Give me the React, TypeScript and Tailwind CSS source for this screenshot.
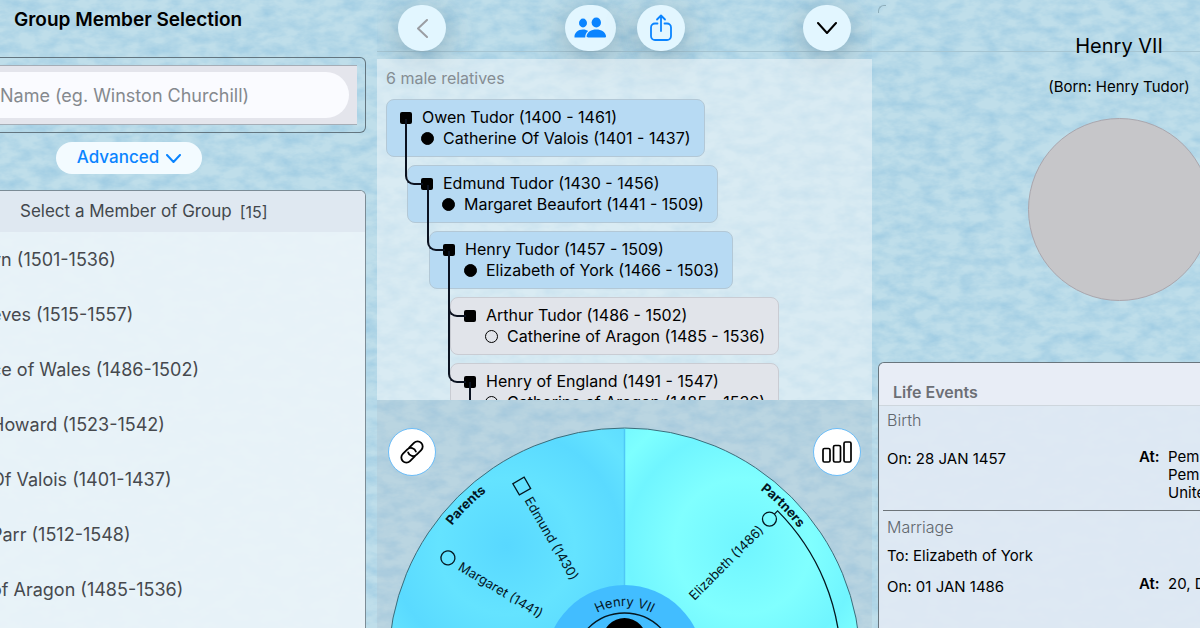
import React from 'react';
import clsx from 'clsx';

type Person = {
  name: string;
  spouse: string;
  depth: number;
  direct: boolean;
  // how many rows up the parent card is
  parentRows: number;
  hasChildren?: boolean;
};

const members = [
  'yn (1501-1536)',
  'eves (1515-1557)',
  'ce of Wales (1486-1502)',
  'Howard (1523-1542)',
  'Of Valois (1401-1437)',
  'Parr (1512-1548)',
  'of Aragon (1485-1536)',
];

const relatives: Person[] = [
  { name: 'Owen Tudor (1400 - 1461)', spouse: 'Catherine Of Valois (1401 - 1437)', depth: 0, direct: true, parentRows: 0 },
  { name: 'Edmund Tudor (1430 - 1456)', spouse: 'Margaret Beaufort (1441 - 1509)', depth: 1, direct: true, parentRows: 1 },
  { name: 'Henry Tudor (1457 - 1509)', spouse: 'Elizabeth of York (1466 - 1503)', depth: 2, direct: true, parentRows: 1 },
  { name: 'Arthur Tudor (1486 - 1502)', spouse: 'Catherine of Aragon (1485 - 1536)', depth: 3, direct: false, parentRows: 1 },
  { name: 'Henry of England (1491 - 1547)', spouse: 'Catherine of Aragon (1485 - 1536)', depth: 3, direct: false, parentRows: 2, hasChildren: true },
];

const indents = ['ml-0', 'ml-[21px]', 'ml-[43px]', 'ml-[64px]'];
const connectorSpans = ['hidden', '-top-[47px] h-[66px]', '-top-[113px] h-[132px]'];

const PaperTexture: React.FC = () => (
  <svg className="absolute inset-0 w-full h-full" aria-hidden="true">
    <filter id="paper" x="0" y="0" width="100%" height="100%" colorInterpolationFilters="sRGB">
      <feTurbulence type="fractalNoise" baseFrequency="0.05 0.09" numOctaves="4" seed="8" />
      <feColorMatrix values="0 0 0 0 0.54  0 0 0 0 0.75  0 0 0 0 0.87  1 0 0 0 -0.33" />
    </filter>
    <rect width="100%" height="100%" filter="url(#paper)" />
  </svg>
);

const Chevron: React.FC<{ direction: 'down' | 'left'; width: number; height: number; color: string }> = ({ direction, width, height, color }) => (
  <svg width={width} height={height} viewBox={`0 0 ${width} ${height}`} fill="none" stroke={color} strokeWidth="2" strokeLinecap="round" strokeLinejoin="round" aria-hidden="true">
    <path d={direction === 'down' ? `M1 1 ${width / 2} ${height - 1} ${width - 1} 1` : `M${width - 1} 1 1 ${height / 2} ${width - 1} ${height - 1}`} />
  </svg>
);

const PeopleIcon: React.FC = () => (
  <svg width="32" height="22" viewBox="0 0 32 22" fill="#0a84ff" aria-hidden="true">
    <ellipse cx="9" cy="6" rx="4" ry="4.4" />
    <path d="M.5 20.500c-.4-4.500 3.500-8 8.500-8 2.200 0 3.900.6 5.200 1.600-2 1.500-3 3.600-3 6.400z" />
    <ellipse cx="22.300" cy="5.500" rx="4.700" ry="5.100" />
    <path d="M14 20.500c-1 0-1.500-.5-1.400-1.400.4-4 4.600-6.700 9.700-6.700s9.300 2.700 9.700 6.700c.1.900-.4 1.400-1.400 1.400z" />
  </svg>
);

const ShareIcon: React.FC = () => (
  <svg width="24" height="28" viewBox="0 0 24 28" fill="none" stroke="#0a84ff" strokeWidth="1.800" strokeLinecap="round" strokeLinejoin="round" aria-hidden="true">
    <path d="M8.500 9.500H6A4 4 0 0 0 2 13.500v8.500a4 4 0 0 0 4 4h12a4 4 0 0 0 4-4v-8.500a4 4 0 0 0-4-4h-2.500" />
    <path d="M12 17V2M8 5.500 12 1.500l4 4" />
  </svg>
);

const LinkIcon: React.FC = () => (
  <svg width="34" height="34" viewBox="0 0 28 28" fill="none" stroke="#000" strokeWidth="1.500" strokeLinecap="round" aria-hidden="true">
    <g transform="rotate(-45 14 14)">
      <path d="M13 18.200H7.500a4.200 4.200 0 0 1 0-8.400h5.300a4.200 4.200 0 0 1 3.700 6.200" />
      <path d="M15 9.800H20.500a4.200 4.200 0 0 1 0 8.400h-5.300a4.200 4.200 0 0 1-3.700-6.200" />
    </g>
  </svg>
);

const BarsIcon: React.FC = () => (
  <svg width="30" height="22" viewBox="0 0 30 22" fill="none" stroke="#000" strokeWidth="1.700" aria-hidden="true">
    <rect x="1" y="7.500" width="7" height="13.500" rx="1.500" />
    <rect x="11.500" y="4.500" width="7" height="16.500" rx="1.500" />
    <rect x="22" y="1" width="7" height="20" rx="1.500" />
  </svg>
);

const RoundButton: React.FC<{ label: string; className?: string; children: React.ReactNode }> = ({ label, className, children }) => (
  <button
    aria-label={label}
    className={clsx(
      'h-[46px] rounded-full bg-[#e2f6ff] flex items-center justify-center shadow-[0_8px_32px_rgba(50,80,100,0.35)]',
      className ?? 'w-12'
    )}
  >
    {children}
  </button>
);

const FloatButton: React.FC<{ label: string; className: string; children: React.ReactNode }> = ({ label, className, children }) => (
  <button
    aria-label={label}
    className={clsx('absolute top-7 size-12 rounded-full bg-white border border-[#6cbdf8] flex items-center justify-center', className)}
  >
    {children}
  </button>
);

const RelativeCard: React.FC<{ person: Person }> = ({ person }) => (
  <li
    className={clsx(
      'relative w-fit h-[58px] rounded-lg border pt-[7px] px-[13px] text-base leading-[21px]',
      indents[person.depth],
      person.direct ? 'bg-[#b7daf3] border-[#b3c8d6]' : 'bg-[#e1e4ea] border-[#c9ccd3]'
    )}
  >
    <span className={clsx('absolute -left-[3px] w-[18px] border-l-2 border-b-2 border-[#0b1220] rounded-bl-[9px]', connectorSpans[person.parentRows])} />
    {person.hasChildren && <span className="absolute left-[18px] top-[18px] w-0.5 h-10 bg-[#0b1220]" />}
    <div className="flex items-center">
      <span className="size-3 mr-2.5 rounded-xs bg-black" />
      {person.name}
    </div>
    <div className="flex items-center pl-[21px]">
      <span className={clsx('size-[13px] mr-[9px] rounded-full border-[1.5px] border-black', person.direct && 'bg-black')} />
      {person.spouse}
    </div>
  </li>
);

// Coordinates are relative to the centre of the wheel
const FamilyWheel: React.FC = () => (
  <svg viewBox="0 0 495 228" className="w-full block" fontFamily="Inter, sans-serif" fontSize="13" fill="#04161f">
    <defs>
      <radialGradient id="parents" gradientUnits="userSpaceOnUse" cx="-118" cy="-118" r="170">
        <stop offset="0" stopColor="#58d8ff" />
        <stop offset="0.4" stopColor="#64e3ff" />
        <stop offset="0.68" stopColor="#5adaff" />
        <stop offset="0.85" stopColor="#64e3ff" />
        <stop offset="1" stopColor="#5edcff" />
      </radialGradient>
      <radialGradient id="partners" gradientUnits="userSpaceOnUse" cx="118" cy="-118" r="170">
        <stop offset="0" stopColor="#70f5ff" />
        <stop offset="0.4" stopColor="#80ffff" />
        <stop offset="0.68" stopColor="#70f5ff" />
        <stop offset="0.85" stopColor="#7dffff" />
        <stop offset="1" stopColor="#74f8ff" />
      </radialGradient>
      <path id="rim" d="M-221 0A221 221 0 0 1 221 0" />
      <path id="hub" d="M-58 0A58 58 0 0 1 58 0" />
    </defs>
    <g transform="translate(247.500 264)">
      <path d="M0 0H-236A236 236 0 0 1 0-236z" fill="url(#parents)" />
      <path d="M0 0V-236A236 236 0 0 1 236 0z" fill="url(#partners)" />
      <circle r="236" fill="none" stroke="#3d6c7a" strokeWidth="1" />
      <path d="M0-235V0" stroke="#4fc8f6" strokeWidth="1.500" />

      <text fontWeight="700">
        <textPath href="#rim" startOffset="25%" textAnchor="middle">Parents</textPath>
      </text>
      <text fontWeight="700">
        <textPath href="#rim" startOffset="75%" textAnchor="middle">Partners</textPath>
      </text>

      <g transform="rotate(60)">
        <rect x="-212" y="-6.500" width="13" height="13" fill="none" stroke="#04161f" strokeWidth="1.300" />
        <text x="-192" y="5">Edmund (1430)</text>
      </g>
      <g transform="rotate(31)">
        <circle cx="-206" r="7" fill="none" stroke="#04161f" strokeWidth="1.300" />
        <text x="-192" y="5">Margaret (1441)</text>
      </g>
      <g transform="rotate(-45)">
        <circle cx="205" r="7" fill="none" stroke="#04161f" strokeWidth="1.300" />
        <path d="M212 0H216.500A216.500 216.500 0 0 1 153 153" fill="none" stroke="#04161f" strokeWidth="1.300" />
        <text x="193" y="5" textAnchor="end">Elizabeth (1486)</text>
      </g>

      <circle r="79" fill="#42bdff" />
      <circle r="51" fill="none" stroke="#04161f" strokeWidth="1.300" />
      <circle cy="-24" r="22" fill="#000" />
      <text>
        <textPath href="#hub" startOffset="50%" textAnchor="middle">Henry VII</textPath>
      </text>
    </g>
  </svg>
);

const MemberPicker: React.FC = () => (
  <section className="flex flex-col pr-[11px] overflow-hidden">
    <h1 className="pl-3.5 mt-2 text-[19px] leading-6 font-semibold text-black whitespace-nowrap">Group Member Selection</h1>

    <div className="mt-[25px] h-[76px] py-[7px] pr-2 border border-l-0 border-[#63757f] rounded-r-md">
      <div className="h-full py-1.5 pr-2 border-y border-[#a5adb6] bg-[#e4e5ec]">
        <input
          type="search"
          aria-label="Name"
          placeholder="Name (eg. Winston Churchill)"
          className="w-full h-full rounded-r-full bg-[#fafbff] text-lg placeholder:text-[#85898e] outline-none"
        />
      </div>
    </div>

    <button className="mt-[9px] ml-14 w-[146px] h-8 shrink-0 rounded-full bg-[#f3fbff] text-[#0a84ff] text-[17px] font-medium flex items-center justify-center gap-[7px]">
      Advanced
      <Chevron direction="down" width={15} height={9} color="#0a84ff" />
    </button>

    <div className="mt-4 flex-1 border border-l-0 border-b-0 border-[#7b8c96] rounded-tr-md bg-[#eaf3f9]/95 overflow-hidden">
      <h2 className="h-[41px] pl-5 flex items-center gap-2 bg-[#dfe8f1] text-[17px] text-[#42474c]">
        Select a Member of Group <span className="text-base">[15]</span>
      </h2>
      <ul className="-ml-[9px]">
        {members.map((member) => (
          <li key={member} className="h-[55px] flex items-center text-lg text-[#46494e] whitespace-nowrap">
            {member}
          </li>
        ))}
      </ul>
    </div>
  </section>
);

const TreeColumn: React.FC = () => (
  <section className="flex flex-col overflow-hidden">
    <header className="h-[52px] shrink-0 px-[21px] flex items-end justify-between border-b border-[#a6c5d2]">
      <RoundButton label="Back">
        <Chevron direction="left" width={11} height={19} color="#9a9da3" />
      </RoundButton>
      <div className="flex gap-[21px]">
        <RoundButton label="Relatives" className="w-[51px]">
          <PeopleIcon />
        </RoundButton>
        <RoundButton label="Share">
          <ShareIcon />
        </RoundButton>
      </div>
      <RoundButton label="Collapse">
        <Chevron direction="down" width={20} height={12} color="#000" />
      </RoundButton>
    </header>

    <div className="mt-[7px] h-[341px] shrink-0 overflow-hidden bg-[#eef6fa]/55 px-[9px] pt-2">
      <p className="text-base leading-[22px] text-[#858d93]">6 male relatives</p>
      <ul className="mt-2.5 flex flex-col gap-2">
        {relatives.map((person) => (
          <RelativeCard key={person.name} person={person} />
        ))}
      </ul>
    </div>

    <div className="relative flex-1 bg-[#aebfcc]/30">
      <FamilyWheel />
      <FloatButton label="Link" className="left-[11px]">
        <LinkIcon />
      </FloatButton>
      <FloatButton label="Statistics" className="right-[11px]">
        <BarsIcon />
      </FloatButton>
    </div>
  </section>
);

const PersonDetails: React.FC = () => (
  <section className="relative overflow-hidden pl-1.5 flex flex-col">
    <div className="absolute inset-x-0 top-[51px] h-px bg-[#a6c5d2]" />
    <div className="absolute left-1.5 top-[5px] size-2 border-l border-t border-[#8eaebb] rounded-tl-md" />
    <div className="relative flex-1 flex flex-col w-[482px]">
      <h2 className="mt-8 text-center text-xl leading-7 text-black">Henry VII</h2>
      <p className="mt-4 text-center text-[15px] leading-[22px] text-black">(Born: Henry Tudor)</p>
      <div className="mt-5 mx-auto size-[183px] rounded-full bg-[#c6c6c9] border border-[#aaa6ad]" />

      <div className="mt-[61px] flex-1 border border-b-0 border-[#68757d] rounded-t-md bg-[#dfe9f3]/95 text-[15px] text-black">
        <h3 className="h-[43px] pt-[17px] pl-3.5 rounded-t-md bg-[#e8edf6] border-b border-[#ced6dd] text-base font-semibold leading-6 text-[#6c6f75]">
          Life Events
        </h3>
        <article className="h-[105px] ml-1 border-b border-[#6d7479]">
          <h4 className="pl-1 pt-0.5 text-base leading-6 font-light text-[#60666c]">Birth</h4>
          <div className="mt-4 pl-1 flex">
            <p className="w-[252px] pt-0.5 leading-[18px]">On: 28 JAN 1457</p>
            <strong className="w-[29px] font-semibold leading-[18px]">At:</strong>
            <p className="leading-[18px]">
              Pemb
              <br />
              Pemb
              <br />
              Unite
            </p>
          </div>
        </article>
        <article className="ml-1">
          <h4 className="pl-1 pt-1 text-base leading-6 font-light text-[#60666c]">Marriage</h4>
          <p className="mt-2 pl-1 leading-[18px]">To: Elizabeth of York</p>
          <div className="mt-2.5 pl-1 flex">
            <p className="w-[252px] pt-[3px] leading-[18px]">On: 01 JAN 1486</p>
            <strong className="w-[29px] font-semibold leading-[18px]">At:</strong>
            <p className="leading-[18px]">20, D</p>
          </div>
        </article>
      </div>
    </div>
  </section>
);

export default function App() {
  return (
    <div className="relative h-screen overflow-hidden bg-[#bfdeea] font-['Inter',sans-serif]">
      <PaperTexture />
      <main className="relative h-full grid grid-cols-[377fr_495fr_328fr]">
        <MemberPicker />
        <TreeColumn />
        <PersonDetails />
      </main>
    </div>
  );
}
